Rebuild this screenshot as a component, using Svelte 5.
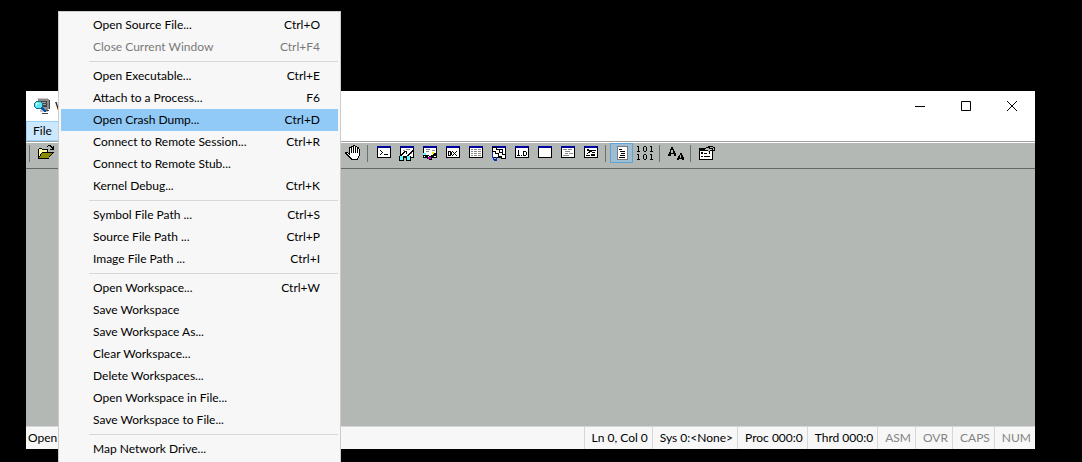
<script>
  const menu = [
    [
      { label: 'Open Source File...', keys: 'Ctrl+O' },
      { label: 'Close Current Window', keys: 'Ctrl+F4', disabled: true },
    ],
    [
      { label: 'Open Executable...', keys: 'Ctrl+E' },
      { label: 'Attach to a Process...', keys: 'F6' },
      { label: 'Open Crash Dump...', keys: 'Ctrl+D' },
      { label: 'Connect to Remote Session...', keys: 'Ctrl+R' },
      { label: 'Connect to Remote Stub...' },
      { label: 'Kernel Debug...', keys: 'Ctrl+K' },
    ],
    [
      { label: 'Symbol File Path ...', keys: 'Ctrl+S' },
      { label: 'Source File Path ...', keys: 'Ctrl+P' },
      { label: 'Image File Path ...', keys: 'Ctrl+I' },
    ],
    [
      { label: 'Open Workspace...', keys: 'Ctrl+W' },
      { label: 'Save Workspace' },
      { label: 'Save Workspace As...' },
      { label: 'Clear Workspace...' },
      { label: 'Delete Workspaces...' },
      { label: 'Open Workspace in File...' },
      { label: 'Save Workspace to File...' },
    ],
    [{ label: 'Map Network Drive...' }],
  ];

  // toolbar groups, split by a separator
  const tools = [
    ['hand'],
    ['command', 'watch', 'locals', 'registers', 'memory', 'stack', 'disasm', 'scratch', 'processes', 'browser'],
    ['source', 'binary'],
    ['font'],
    ['options'],
  ];
  const windowed = tools[1];

  const status = ['Ln 0, Col 0', 'Sys 0:<None>', 'Proc 000:0', 'Thrd 000:0'];
  const toggles = ['ASM', 'OVR', 'CAPS', 'NUM'];

  let selected = $state('Open Crash Dump...');
</script>

<main>
  <section class="window">
    <header class="titlebar">
      <svg width="16" height="16" viewBox="0 0 16 16" shape-rendering="crispEdges">
        <path fill="#8c8c8c" d="M4 1h11v10h-1v2H7V9H4z" />
        <path fill="#c6c6c6" d="M4 0h10v1H4zM6 12h8v2H6z" />
        <path fill="#444" d="M6 3h7v6H6zM12 12h3v1h-3zM8 15h6v1H8zM15 2h1v9h-1z" />
        <path fill="#9c9c9c" d="M8 4h4v1H8zM9 6h3v1H9z" />
        <path fill="#10738c" d="M2 3h5v1h1v1h1v4H8v1H7v1H2v-1H1V9H0V5h1V4h1z" />
        <path fill="#5ee5ef" d="M2 4h5v1h1v4H7v1H2V9H1V5h1z" />
        <path fill="#c4ffff" d="M2 5h3v1H3v2H2z" />
        <path stroke="#0050b8" stroke-width="2" fill="none" d="M8 10l4 4" />
      </svg>
      <span class="title">WinDbg</span>
      <div class="caption">
        <button aria-label="Minimize"><svg width="12" height="12" viewBox="0 0 12 12"><path d="M1 6.500h10" /></svg></button>
        <button aria-label="Maximize"><svg width="12" height="12" viewBox="0 0 12 12"><path d="M1.500 1.500h9v9h-9z" /></svg></button>
        <button aria-label="Close"><svg width="12" height="12" viewBox="0 0 12 12"><path d="M1 1l10 10M11 1L1 11" /></svg></button>
      </div>
    </header>

    <nav class="menubar"><button>File</button></nav>

    <div class="toolbar">
      <i class="sep"></i>
      <button aria-label="open">
        <svg width="18" height="16" viewBox="0 0 18 16" shape-rendering="crispEdges">
          <path d="M1 4h1V3h3v1h6v3h6v1h-1v1h-1v1h-1v1h-1v1h-1v2H1z" />
          <path fill="#ffff9c" d="M2 4h3v1h5v2H5v1H4v1H3v2H2z" />
          <path fill="#8c8c00" d="M5 8h10v1h-1v1h-1v1h-1v2H2v-1h1v-1h1v-2h1z" />
          <path d="M10 1h1V0h3v1h1v1h1V1h1v4h-4V4h2V3h-1V2h-1V1h-2v1h-1z" />
        </svg>
      </button>
      <div class="covered"></div>
      {#each tools as group, g}
        {#if g > 0}<i class="sep"></i>{/if}
        {#each group as tool}
          <button class:pressed={tool === 'source'} aria-label={tool}>
            <svg width="18" height="16" viewBox="0 0 18 16" shape-rendering="crispEdges">
              {#if windowed.includes(tool)}
                <path d="M2 1h14v12H2z" />
                <path fill="#fff" d="M3 3h12v9H3z" />
                <path fill="#00009c" d="M2 1h14v2H2z" />
              {/if}
              {#if tool === 'hand'}
                <path d="M7 1h2V0h2v1h2v1h2v2h1v7h-1v2h-1v2H7v-1H6v-1H5v-1H4v-1H3v-1H2V9H1V7h3v1h1V2h2z" />
                <path fill="#fff" d="M6 3h1v5h1V2h1v6h1V1h1v7h1V2h1v6h1V4h1v7h-1v2h-1v1H8v-1H7v-1H6v-1H5v-1H4V9H3V8H2h2v1h1v1h1z" />
              {:else if tool === 'command'}
                <path d="M5 5h1v1h1v1h1v1H7v1H6v1H5V9h1V8h1V7H6V6H5zM9 9h4v1H9z" />
              {:else if tool === 'watch'}
                <path fill="#8c8c8c" d="M5 5h2v1H5zM8 4h4v1H8zM11 8h3v1h-3z" />
                <path d="M2 10h1V9h1V8h1V7h1V6h3v3H8V7H7v1H6v1H5v1H4v1H2zM9 10h1V9h1V8h1V7h1V6h1V5h2v3h-1V7h-1v1h-1v1h-1v1h-1v1H9zM6 11h3v1H6z" />
                <path d="M1 11h5v5H1zM8 11h5v5H8z" />
                <path fill="#5ef7ff" d="M2 11h3v4H2zM9 11h3v4H9z" />
              {:else if tool === 'locals'}
                <path fill="#8c8c8c" d="M5 4h4v1H5zM5 6h3v1H5zM11 5h3v1h-3z" />
                <path d="M2 8h3v1h2v1h1v1h2v-1h2V8h3v3h-2v2h-2v2H8v-1H6v-2H4v-1H2z" />
                <path fill="#fff" d="M5 9h2v1H5zM10 9h2v1h-2zM7 11h1v1H7z" />
                <path fill="#5ef7ff" d="M2 8h3v2H2z" />
                <path fill="#b000c8" d="M7 12h3v2H7z" />
                <path fill="#ffe800" d="M11 7h2v2h-2z" />
              {:else if tool === 'registers'}
                <path d="M4 6h3v1h1v3H7v1H4v-1h2V7H5v3H4zM8 6h1v1h1v1h1V7h1V6h1v1h-1v1h-1v1h1v1h1v1h-1v-1h-1V9h-1v1H9v1H8v-1h1V9h1V8H9V7H8z" />
              {:else if tool === 'memory'}
                <path fill="#8c8c8c" d="M4 4h2v1H4zM7 4h3v1H7zM11 4h3v1h-3zM4 6h2v1H4zM7 6h3v1H7zM11 6h3v1h-3zM4 8h2v1H4zM7 8h3v1H7zM11 8h3v1h-3zM4 10h2v1H4zM7 10h3v1H7zM11 10h3v1h-3z" />
              {:else if tool === 'stack'}
                <path fill="#0030b8" d="M2 7h1v5h1v2h2v-2h1v4H4v-1H3v-2H2z" />
                <path d="M2 2h5v5H2zM5 4h5v5H5zM8 7h5v5H8zM11 9h5v5h-5zM8 4h5v5H8z" />
                <path fill="#fff" d="M3 3h3v3H3zM6 5h3v3H6zM9 8h3v3H9zM12 10h3v3h-3zM10 5h2v2h-2z" />
              {:else if tool === 'disasm'}
                <path d="M5 5h1v5h1v1H4v-1h1V6H4zM8 10h1v1H8zM10 6h3v1h-3zM10 10h3v1h-3zM10 7h1v3h-1zM13 7h1v3h-1z" />
              {:else if tool === 'processes'}
                <path fill="#8c8c8c" d="M4 4h4v1H4zM9 4h4v1H9zM6 6h5v1H6zM6 8h3v1H6zM10 8h4v1h-4zM4 10h6v1H4z" />
              {:else if tool === 'browser'}
                <path d="M5 4h2v1h2v1h1v1H8v1H6v1H5V8h1V7h1V6H5zM9 5h5v1H9zM10 7h3v1h-3zM4 10h4v1H4zM9 9h4v2H9z" />
              {:else if tool === 'source'}
                <path fill="#7a7a7a" d="M4 1h11v14H4z" />
                <path fill="#fff" d="M5 2h9v12H5z" />
                <path d="M6 4h3v1H6zM7 6h5v1H7zM8 8h4v1H8zM7 10h5v1H7zM6 12h6v1H6z" />
              {:else if tool === 'binary'}
                <path d="M1 1h2v5h1v1H1V6h1V2H1zM8 1h2v1H8zM8 6h2v1H8zM7 2h1v4H7zM10 2h1v4h-1zM15 1h1v5h1v1h-3V6h1V2h-1V1z" />
                <path d="M1 9h2v5h1v1H1v-1h1v-4H1zM8 9h2v1H8zM8 14h2v1H8zM7 10h1v4H7zM10 10h1v4h-1zM15 9h1v5h1v1h-3v-1h1v-4h-1V9z" />
              {:else if tool === 'font'}
                <path d="M4 2h2v2h1v2h1v2h1v3H7V9H4v2H1V9h1V7h1V4h1zM4 5v3h2V5zM13 8h2v2h1v2h1v3h-2v-1h-3v1h-2v-2h1v-2h1v-1h1zM13 10v3h1v-3z" />
              {:else if tool === 'options'}
                <path d="M1 3h7V2h2V1h5v1h2v4h-2v9H1z" />
                <path fill="#fff" d="M2 6h12v8H2z" />
                <path fill="#b3b8b4" d="M8 3h3v1h3v1h-2v2h-2V5H7V4h1zM12 2h3v1h1v2h-1V3h-3z" />
                <path d="M3 7h2v2H3zM6 8h3v1H6zM3 11h2v1H3zM6 11h6v1H6zM11 6h1v3h-1z" />
              {/if}
            </svg>
          </button>
        {/each}
      {/each}
    </div>

    <div class="workspace"></div>

    <footer class="statusbar">
      <span class="hint">Open</span>
      {#each status as text}<span>{text}</span>{/each}
      {#each toggles as text}<span class="off">{text}</span>{/each}
    </footer>
  </section>

  <div class="menu" role="menu">
    {#each menu as group, g}
      {#if g > 0}<hr />{/if}
      {#each group as item}
        <button
          role="menuitem"
          class:selected={item.label === selected}
          disabled={item.disabled}
          onmouseenter={() => (selected = item.label)}
        >
          <span>{item.label}</span>
          <span>{item.keys ?? ''}</span>
        </button>
      {/each}
    {/each}
  </div>
</main>

<style>
  :global(body) {
    background: #000;
  }

  main {
    position: relative;
    box-sizing: border-box;
    height: 100vh;
    padding: 91px 47px 13px 26px;
    overflow: hidden;
    font: 12px/22px "Segoe UI", Lato, sans-serif;
    color: #000;
  }

  button {
    margin: 0;
    padding: 0;
    border: 0;
    background: none;
    font: inherit;
    color: inherit;
  }

  .window {
    display: flex;
    flex-direction: column;
    height: 100%;
    background: #fff;
  }

  .titlebar {
    display: flex;
    align-items: center;
    height: 29px;
    padding-left: 8px;
  }
  .title {
    flex: 1;
    margin-left: 5px;
  }
  .caption {
    display: flex;
  }
  .caption button {
    display: grid;
    place-items: center;
    width: 46px;
    height: 29px;
  }
  .caption path {
    fill: none;
    stroke: #000;
  }

  .menubar {
    height: 21px;
    border-bottom: 1px solid #a0a0a0;
  }
  .menubar button {
    box-sizing: border-box;
    height: 20px;
    padding: 0 6px;
    border: 1px solid #99d1ff;
    background: #cce8ff;
    line-height: 18px;
  }

  .toolbar {
    display: flex;
    height: 25px;
    border-top: 1px solid #fff;
    border-bottom: 1px solid #646866;
    background: #b3b8b4;
  }
  .toolbar button {
    display: grid;
    place-items: center;
    box-sizing: border-box;
    width: 23px;
    height: 20px;
  }
  .toolbar .pressed {
    border: 1px solid #5fa4d8;
    background: #9fbdd0;
  }
  .sep {
    width: 1px;
    height: 17px;
    margin: 2px 4px 0 3px;
    background: #6c706e;
  }
  .covered {
    width: 284px;
  }

  .workspace {
    flex: 1;
    background: #b3b8b4;
  }

  .statusbar {
    display: flex;
    border-top: 1px solid #d7d7d7;
    background: #f7f7f7;
  }
  .statusbar span {
    padding: 0 4px 0 7px;
    border-left: 1px solid #d7d7d7;
  }
  .statusbar .hint {
    flex: 1;
    padding-left: 2px;
    border: 0;
  }
  .statusbar .off {
    color: #848484;
  }

  .menu {
    position: absolute;
    top: 11px;
    left: 58px;
    box-sizing: border-box;
    width: 283px;
    padding: 2px;
    border: 1px solid #ccc;
    background: #f7f7f7;
  }
  .menu button {
    display: flex;
    justify-content: space-between;
    width: 100%;
    height: 22px;
    padding: 0 18px 0 32px;
  }
  .menu button:disabled {
    color: #7a7a7a;
  }
  .menu .selected {
    background: #91c9f7;
  }
  .menu hr {
    height: 1px;
    margin: 3px 0 3px 28px;
    border: 0;
    background: #d7d7d7;
  }
</style>
